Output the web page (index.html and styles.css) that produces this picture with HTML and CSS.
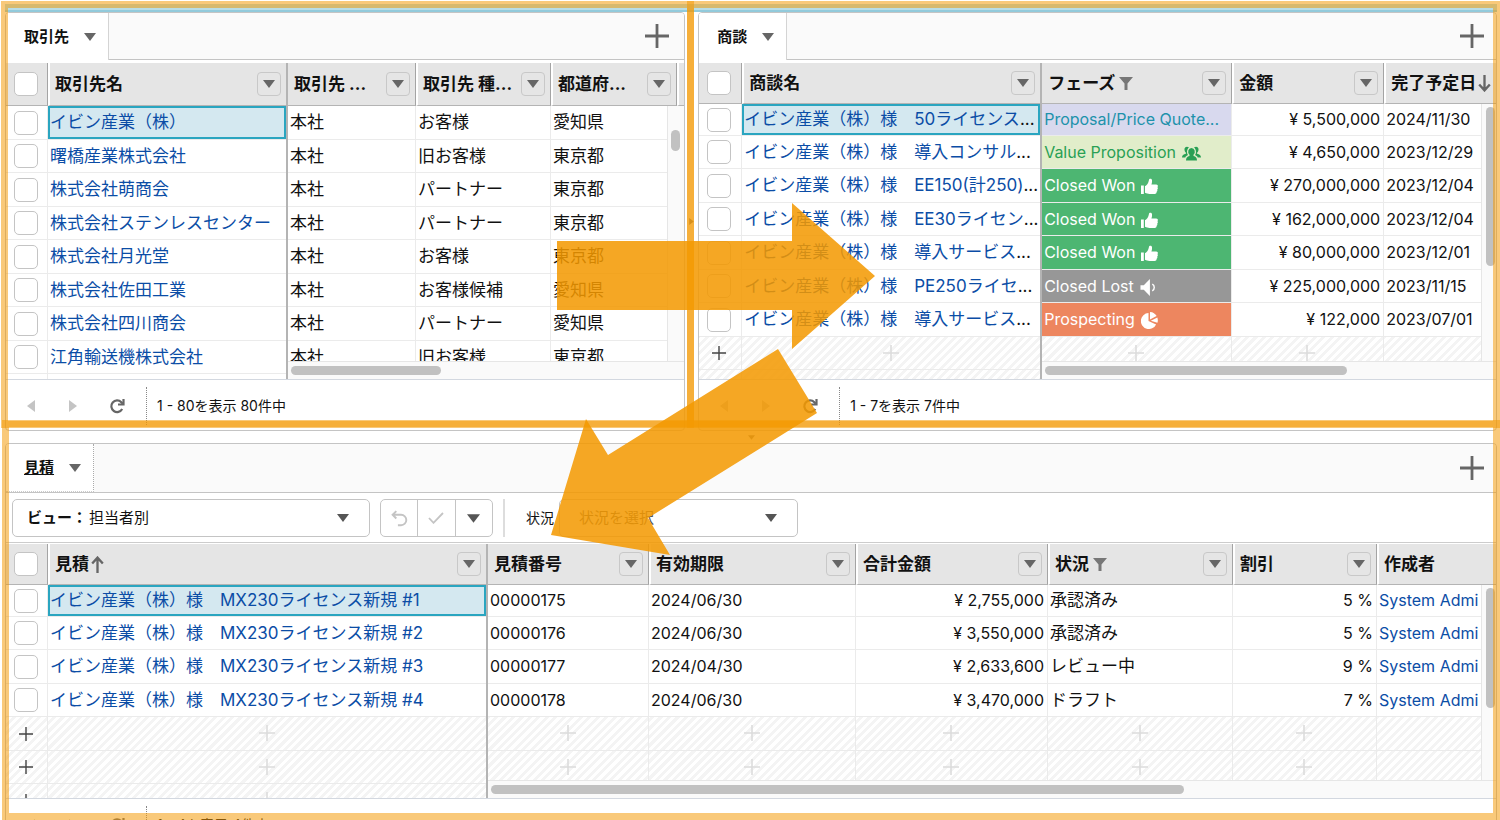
FILE: index.html
```html
<!DOCTYPE html>
<html lang="ja">
<head>
<meta charset="utf-8">
<title>取引先・商談・見積</title>
<link rel="stylesheet" href="styles.css">
</head>
<body>
<svg class="defs" aria-hidden="true">
  <symbol id="down" viewBox="0 0 12 8"><path d="M0 0h12L6 8z"/></symbol>
  <symbol id="left" viewBox="0 0 8 12"><path d="M8 0v12L0 6z"/></symbol>
  <symbol id="right" viewBox="0 0 8 12"><path d="M0 0v12l8-6z"/></symbol>
  <symbol id="plus" viewBox="0 0 24 24"><path d="M10.600 0h2.800v10.600H24v2.800H13.400V24h-2.800V13.400H0v-2.800h10.600z"/></symbol>
  <symbol id="thin-plus" viewBox="0 0 16 16"><path d="M7.200 0h1.600v7.200H16v1.600H8.800V16H7.200V8.800H0V7.200h7.200z"/></symbol>
  <symbol id="reload" viewBox="0 0 16 16"><path d="M13.200 11A5.800 5.800 0 1 1 12.300 4.200l1.500 1.500" fill="none" stroke="currentColor" stroke-width="2.200"/><path d="M15.600 1v6.600H9V5.400h4.400V1z"/></symbol>
  <symbol id="filter" viewBox="0 0 14 13"><path d="M0 0h14L8.500 6.500V13h-3V6.500z"/></symbol>
  <symbol id="sort-up" viewBox="0 0 12 16"><path d="M6 16V2M1 7l5-5.500L11 7" fill="none" stroke="currentColor" stroke-width="2.200"/></symbol>
  <symbol id="sort-down" viewBox="0 0 12 16"><path d="M6 0v14M1 9l5 5.500L11 9" fill="none" stroke="currentColor" stroke-width="2.200"/></symbol>
  <symbol id="undo" viewBox="0 0 16 16"><path d="M5 1L1.500 4.500 5 8M2 4.500h7.500a4.800 4.800 0 0 1 0 9.800H6.500" fill="none" stroke="currentColor" stroke-width="1.800"/></symbol>
  <symbol id="check" viewBox="0 0 16 12"><path d="M1 6l4.500 4.800L15 1" fill="none" stroke="currentColor" stroke-width="1.800"/></symbol>
  <symbol id="thumb" viewBox="0 0 17 17"><path d="M0 7.500h2.800V16H0zM4 8.200c2-1.200 3.400-3 3.900-6C8.100.5 10.600.3 11 2.300c.2 1.400-.1 2.900-.6 4.300h4.800c2 0 1.900 2 1.300 2.600.6.800.4 1.900-.3 2.400.4.900.1 1.800-.6 2.200.1 1.200-.6 2.200-2 2.200H8.500c-1.800 0-2.900-.6-4.500-1.200z"/></symbol>
  <symbol id="speaker" viewBox="0 0 17 18"><path d="M0 6.500h3.500L10 0v18l-6.500-6.500H0z"/><path d="M12.500 5.500c2.800 1.500 2.800 5.500 0 7" fill="none" stroke="currentColor" stroke-width="1.500"/></symbol>
  <symbol id="pie" viewBox="0 0 17 17"><path d="M7.500 1v8l7.600 3.400A8 8 0 1 1 7.500 1z"/><path d="M9 0c3 .2 5.300 1.600 6.600 4L9 7.400z"/><path d="M16.300 5.400c.7 1.800.7 3.600.1 5.400L9.800 8.700z"/></symbol>
  <symbol id="people" viewBox="0 0 19 14"><path d="M9.500 1.500a3.400 3.800 0 0 1 2 6.800v1.200c2.300.8 3.500 1.500 3.500 4.500H4c0-3 1.200-3.700 3.500-4.500V8.300a3.400 3.800 0 0 1 2-6.800z"/><path d="M7 .8C4.500-.6 2.200.6 2.500 3.200c.1 1.400.7 2.300 1.400 2.900v1.100C1.500 7.900 0 8.600 0 11h3.300c.4-1.200 1.500-2 2.700-2.400C4.400 6.400 4.700 3 7 .8zM12 .8c2.500-1.400 4.800-.2 4.500 2.400-.1 1.400-.7 2.300-1.400 2.900v1.100c2.400.7 3.900 1.400 3.900 3.800h-3.300c-.4-1.200-1.500-2-2.700-2.400C14.600 6.400 14.300 3 12 .8z"/></symbol>
</svg>

<div class="strip"></div>
<main class="app">
  <div class="top">
    <section class="panel panel-accounts">
      <div class="tabs">
        <button class="tab">取引先<svg class="caret"><use href="#down"/></svg></button>
        <button class="add" aria-label="タブを追加"><svg><use href="#plus"/></svg></button>
      </div>
      <div class="grid grid-accounts">
        <div class="frozen">
          <table>
            <colgroup><col class="c-check"><col></colgroup>
            <thead><tr>
              <th class="pick"><input type="checkbox" aria-label="すべて選択"></th>
              <th><div class="head"><span>取引先名</span><button class="menu" aria-label="取引先名メニュー"><svg><use href="#down"/></svg></button></div></th>
            </tr></thead>
            <tbody>
              <tr><td class="pick"><input type="checkbox" aria-label="行1"></td><td class="selected"><a href="#">イビン産業（株）</a></td></tr>
              <tr><td class="pick"><input type="checkbox" aria-label="行2"></td><td><a href="#">曙橋産業株式会社</a></td></tr>
              <tr><td class="pick"><input type="checkbox" aria-label="行3"></td><td><a href="#">株式会社萌商会</a></td></tr>
              <tr><td class="pick"><input type="checkbox" aria-label="行4"></td><td><a href="#">株式会社ステンレスセンター</a></td></tr>
              <tr><td class="pick"><input type="checkbox" aria-label="行5"></td><td><a href="#">株式会社月光堂</a></td></tr>
              <tr><td class="pick"><input type="checkbox" aria-label="行6"></td><td><a href="#">株式会社佐田工業</a></td></tr>
              <tr><td class="pick"><input type="checkbox" aria-label="行7"></td><td><a href="#">株式会社四川商会</a></td></tr>
              <tr><td class="pick"><input type="checkbox" aria-label="行8"></td><td><a href="#">江角輸送機株式会社</a></td></tr>
              <tr><td class="pick"><input type="checkbox" aria-label="行9"></td><td></td></tr>
            </tbody>
          </table>
        </div>
        <div class="scroll">
          <table>
            <colgroup><col class="a-site"><col class="a-type"><col class="a-pref"><col></colgroup>
            <thead><tr>
              <th><div class="head"><span>取引先 ...</span><button class="menu" aria-label="取引先 部門メニュー"><svg><use href="#down"/></svg></button></div></th>
              <th><div class="head"><span>取引先 種...</span><button class="menu" aria-label="取引先 種別メニュー"><svg><use href="#down"/></svg></button></div></th>
              <th><div class="head"><span>都道府...</span><button class="menu" aria-label="都道府県メニュー"><svg><use href="#down"/></svg></button></div></th>
              <th></th>
            </tr></thead>
            <tbody>
              <tr><td>本社</td><td>お客様</td><td>愛知県</td><td></td></tr>
              <tr><td>本社</td><td>旧お客様</td><td>東京都</td><td></td></tr>
              <tr><td>本社</td><td>パートナー</td><td>東京都</td><td></td></tr>
              <tr><td>本社</td><td>パートナー</td><td>東京都</td><td></td></tr>
              <tr><td>本社</td><td>お客様</td><td>東京都</td><td></td></tr>
              <tr><td>本社</td><td>お客様候補</td><td>愛知県</td><td></td></tr>
              <tr><td>本社</td><td>パートナー</td><td>愛知県</td><td></td></tr>
              <tr><td>本社</td><td>旧お客様</td><td>東京都</td><td></td></tr>
            </tbody>
          </table>
          <div class="vbar"><i></i></div>
          <div class="hbar"><i></i></div>
        </div>
      </div>
      <footer class="pager">
        <button class="prev" aria-label="前へ"><svg><use href="#left"/></svg></button>
        <button class="next" aria-label="次へ"><svg><use href="#right"/></svg></button>
        <button class="reload" aria-label="更新"><svg><use href="#reload"/></svg></button>
        <span class="count">1 - 80を表示 80件中</span>
      </footer>
    </section>

    <div class="split-v"><svg><use href="#right"/></svg></div>

    <section class="panel panel-deals">
      <div class="tabs">
        <button class="tab">商談<svg class="caret"><use href="#down"/></svg></button>
        <button class="add" aria-label="タブを追加"><svg><use href="#plus"/></svg></button>
      </div>
      <div class="grid grid-deals">
        <div class="frozen">
          <table>
            <colgroup><col class="c-check"><col></colgroup>
            <thead><tr>
              <th class="pick"><input type="checkbox" aria-label="すべて選択"></th>
              <th><div class="head"><span>商談名</span><button class="menu" aria-label="商談名メニュー"><svg><use href="#down"/></svg></button></div></th>
            </tr></thead>
            <tbody>
              <tr><td class="pick"><input type="checkbox" aria-label="行1"></td><td class="selected"><a href="#">イビン産業（株）様　50ライセンス</a>...</td></tr>
              <tr><td class="pick"><input type="checkbox" aria-label="行2"></td><td><a href="#">イビン産業（株）様　導入コンサル</a>...</td></tr>
              <tr><td class="pick"><input type="checkbox" aria-label="行3"></td><td><a href="#">イビン産業（株）様　EE150(計250)</a>...</td></tr>
              <tr><td class="pick"><input type="checkbox" aria-label="行4"></td><td><a href="#">イビン産業（株）様　EE30ライセン</a>...</td></tr>
              <tr><td class="pick"><input type="checkbox" aria-label="行5"></td><td><a href="#">イビン産業（株）様　導入サービス</a>...</td></tr>
              <tr><td class="pick"><input type="checkbox" aria-label="行6"></td><td><a href="#">イビン産業（株）様　PE250ライセ</a>...</td></tr>
              <tr><td class="pick"><input type="checkbox" aria-label="行7"></td><td><a href="#">イビン産業（株）様　導入サービス</a>...</td></tr>
              <tr class="new"><td class="pick"><svg><use href="#thin-plus"/></svg></td><td><svg><use href="#thin-plus"/></svg></td></tr>
              <tr class="new"><td class="pick"></td><td></td></tr>
            </tbody>
          </table>
        </div>
        <div class="scroll">
          <table>
            <colgroup><col class="d-phase"><col class="d-amount"><col></colgroup>
            <thead><tr>
              <th><div class="head"><span>フェーズ</span><svg class="filter"><use href="#filter"/></svg><button class="menu" aria-label="フェーズメニュー"><svg><use href="#down"/></svg></button></div></th>
              <th><div class="head"><span>金額</span><button class="menu" aria-label="金額メニュー"><svg><use href="#down"/></svg></button></div></th>
              <th><div class="head"><span>完了予定日</span><svg class="sort"><use href="#sort-down"/></svg></div></th>
            </tr></thead>
            <tbody>
              <tr><td class="phase quote">Proposal/Price Quote...</td><td class="num">¥ 5,500,000</td><td class="latin">2024/11/30</td></tr>
              <tr><td class="phase value">Value Proposition<svg class="wide"><use href="#people"/></svg></td><td class="num">¥ 4,650,000</td><td class="latin">2023/12/29</td></tr>
              <tr><td class="phase won">Closed Won<svg><use href="#thumb"/></svg></td><td class="num">¥ 270,000,000</td><td class="latin">2023/12/04</td></tr>
              <tr><td class="phase won">Closed Won<svg><use href="#thumb"/></svg></td><td class="num">¥ 162,000,000</td><td class="latin">2023/12/04</td></tr>
              <tr><td class="phase won">Closed Won<svg><use href="#thumb"/></svg></td><td class="num">¥ 80,000,000</td><td class="latin">2023/12/01</td></tr>
              <tr><td class="phase lost">Closed Lost<svg><use href="#speaker"/></svg></td><td class="num">¥ 225,000,000</td><td class="latin">2023/11/15</td></tr>
              <tr><td class="phase prospect">Prospecting<svg><use href="#pie"/></svg></td><td class="num">¥ 122,000</td><td class="latin">2023/07/01</td></tr>
              <tr class="new"><td><svg><use href="#thin-plus"/></svg></td><td><svg><use href="#thin-plus"/></svg></td><td></td></tr>
            </tbody>
          </table>
          <div class="vbar"><i></i></div>
          <div class="hbar"><i></i></div>
        </div>
      </div>
      <footer class="pager">
        <button class="prev" aria-label="前へ"><svg><use href="#left"/></svg></button>
        <button class="next" aria-label="次へ"><svg><use href="#right"/></svg></button>
        <button class="reload" aria-label="更新"><svg><use href="#reload"/></svg></button>
        <span class="count">1 - 7を表示 7件中</span>
      </footer>
    </section>
  </div>

  <div class="split-h"><svg><use href="#down"/></svg></div>

  <section class="panel panel-quotes">
    <div class="tabs">
      <button class="tab focused"><u>見積</u><svg class="caret"><use href="#down"/></svg></button>
      <button class="add" aria-label="タブを追加"><svg><use href="#plus"/></svg></button>
    </div>
    <div class="toolbar">
      <div class="picker view">
        <label for="view">ビュー：</label>
        <select id="view"><option>担当者別</option></select>
        <svg><use href="#down"/></svg>
      </div>
      <div class="group">
        <button class="off" aria-label="元に戻す"><svg class="undo"><use href="#undo"/></svg></button>
        <button class="off" aria-label="保存"><svg class="check"><use href="#check"/></svg></button>
        <button aria-label="その他"><svg class="caret"><use href="#down"/></svg></button>
      </div>
      <div class="filterbox">
        <label for="status">状況</label>
        <div class="picker status">
          <select id="status"><option>状況を選択</option></select>
          <svg><use href="#down"/></svg>
        </div>
      </div>
    </div>
    <div class="grid grid-quotes">
      <div class="frozen">
        <table>
          <colgroup><col class="c-check"><col></colgroup>
          <thead><tr>
            <th class="pick"><input type="checkbox" aria-label="すべて選択"></th>
            <th><div class="head"><span>見積</span><svg class="sort"><use href="#sort-up"/></svg><button class="menu" aria-label="見積メニュー"><svg><use href="#down"/></svg></button></div></th>
          </tr></thead>
          <tbody>
            <tr><td class="pick"><input type="checkbox" aria-label="行1"></td><td class="selected"><a href="#">イビン産業（株）様　MX230ライセンス新規 #1</a></td></tr>
            <tr><td class="pick"><input type="checkbox" aria-label="行2"></td><td><a href="#">イビン産業（株）様　MX230ライセンス新規 #2</a></td></tr>
            <tr><td class="pick"><input type="checkbox" aria-label="行3"></td><td><a href="#">イビン産業（株）様　MX230ライセンス新規 #3</a></td></tr>
            <tr><td class="pick"><input type="checkbox" aria-label="行4"></td><td><a href="#">イビン産業（株）様　MX230ライセンス新規 #4</a></td></tr>
            <tr class="new"><td class="pick"><svg><use href="#thin-plus"/></svg></td><td><svg><use href="#thin-plus"/></svg></td></tr>
            <tr class="new"><td class="pick"><svg><use href="#thin-plus"/></svg></td><td><svg><use href="#thin-plus"/></svg></td></tr>
            <tr class="new"><td class="pick"><svg><use href="#thin-plus"/></svg></td><td><svg><use href="#thin-plus"/></svg></td></tr>
          </tbody>
        </table>
      </div>
      <div class="scroll">
        <table>
          <colgroup><col class="q-no"><col class="q-date"><col class="q-total"><col class="q-status"><col class="q-off"><col></colgroup>
          <thead><tr>
            <th><div class="head"><span>見積番号</span><button class="menu" aria-label="見積番号メニュー"><svg><use href="#down"/></svg></button></div></th>
            <th><div class="head"><span>有効期限</span><button class="menu" aria-label="有効期限メニュー"><svg><use href="#down"/></svg></button></div></th>
            <th><div class="head"><span>合計金額</span><button class="menu" aria-label="合計金額メニュー"><svg><use href="#down"/></svg></button></div></th>
            <th><div class="head"><span>状況</span><svg class="filter"><use href="#filter"/></svg><button class="menu" aria-label="状況メニュー"><svg><use href="#down"/></svg></button></div></th>
            <th><div class="head"><span>割引</span><button class="menu" aria-label="割引メニュー"><svg><use href="#down"/></svg></button></div></th>
            <th><div class="head"><span>作成者</span></div></th>
          </tr></thead>
          <tbody>
            <tr><td class="latin">00000175</td><td class="latin">2024/06/30</td><td class="num">¥ 2,755,000</td><td>承認済み</td><td class="num">5 %</td><td class="latin"><a href="#">System Admi</a></td></tr>
            <tr><td class="latin">00000176</td><td class="latin">2024/06/30</td><td class="num">¥ 3,550,000</td><td>承認済み</td><td class="num">5 %</td><td class="latin"><a href="#">System Admi</a></td></tr>
            <tr><td class="latin">00000177</td><td class="latin">2024/04/30</td><td class="num">¥ 2,633,600</td><td>レビュー中</td><td class="num">9 %</td><td class="latin"><a href="#">System Admi</a></td></tr>
            <tr><td class="latin">00000178</td><td class="latin">2024/06/30</td><td class="num">¥ 3,470,000</td><td>ドラフト</td><td class="num">7 %</td><td class="latin"><a href="#">System Admi</a></td></tr>
            <tr class="new"><td><svg><use href="#thin-plus"/></svg></td><td><svg><use href="#thin-plus"/></svg></td><td><svg><use href="#thin-plus"/></svg></td><td><svg><use href="#thin-plus"/></svg></td><td><svg><use href="#thin-plus"/></svg></td><td></td></tr>
            <tr class="new"><td><svg><use href="#thin-plus"/></svg></td><td><svg><use href="#thin-plus"/></svg></td><td><svg><use href="#thin-plus"/></svg></td><td><svg><use href="#thin-plus"/></svg></td><td><svg><use href="#thin-plus"/></svg></td><td></td></tr>
          </tbody>
        </table>
        <div class="vbar"><i></i></div>
        <div class="hbar"><i></i></div>
      </div>
    </div>
    <footer class="pager">
      <button class="prev" aria-label="前へ"><svg><use href="#left"/></svg></button>
      <button class="next" aria-label="次へ"><svg><use href="#right"/></svg></button>
      <button class="reload" aria-label="更新"><svg><use href="#reload"/></svg></button>
      <span class="count">1 - 4を表示 4件中</span>
    </footer>
  </section>
</main>

<svg class="marks" viewBox="0 0 1500 820" preserveAspectRatio="none" aria-hidden="true">
  <g fill="none" stroke="#f39800" stroke-opacity=".52" stroke-width="7">
    <rect x="4.500" y="4.500" width="686" height="420"/>
    <rect x="690.500" y="4.500" width="806" height="420"/>
    <rect x="5.500" y="423.500" width="1491" height="393"/>
  </g>
  <g fill="#f39800" fill-opacity=".86">
    <path d="M557 241H792V203L875 276L792 349V310H557Z"/>
    <path d="M778 349L817 413L648 518L670 555L551 535L586 419L608 455Z"/>
  </g>
</svg>
</body>
</html>
```
FILE: styles.css
```css
* { box-sizing: border-box; }
html, body { height: 100%; }
body {
  margin: 0;
  overflow: hidden;
  position: relative;
  background: #fff;
  color: #111;
  font-family: Inter, "Noto Sans CJK JP", sans-serif;
  font-size: 17px;
  line-height: 24px;
}
button, select, input { font: inherit; color: inherit; margin: 0; }
button { background: none; border: 0; padding: 0; display: flex; align-items: center; justify-content: center; }
svg { display: block; fill: currentColor; flex: none; }
a { color: #0b4da6; text-decoration: none; }
.defs { position: absolute; width: 0; height: 0; }

.strip { height: 12px; margin: 0 3px 0 5px; border-top: 4px solid #fff; border-bottom: 2px solid #92cadb; background: #b9dde6; }
.app { padding: 0 3px 0 5px; }
.top { display: flex; }
.panel { border: 1px solid #c4c4c4; border-radius: 4px; overflow: hidden; min-width: 0; }
.panel-accounts { flex: 680 1 0; }
.panel-deals { flex: 799 1 0; }
.split-v, .split-h { display: flex; align-items: center; justify-content: center; color: #777; }
.split-v { width: 13px; }
.split-v svg { width: 5px; height: 7px; }
.split-h { height: 12px; }
.split-h svg { width: 7px; height: 5px; }

/* tabs */
.tabs { display: flex; justify-content: space-between; height: 47px; margin-bottom: 3px; background: #fafafa; border-bottom: 1px solid #c4c4c4; padding-right: 12px; }
.panel-accounts .tabs { padding-right: 15px; }
.tab { height: 47px; gap: 15px; padding: 0 12px 0 18px; background: #fff; border-right: 1px solid #d4d4d4; font-size: 15px; font-weight: 700; }
.tab.focused { height: 48px; border-right: 1px dotted #aaa; border-bottom: 1px dotted #ccc; }
.caret { width: 12px; height: 8px; color: #666; }
.add { color: #666; }
.add svg { width: 24px; height: 24px; }

/* toolbar */
.toolbar { display: flex; align-items: center; gap: 10px; height: 49px; padding: 0 6px; border-bottom: 1px solid #ccc; margin-bottom: 1px; font-size: 15px; }
.panel-quotes .tabs { margin-bottom: 1px; height: 49px; }
.picker { position: relative; display: flex; align-items: center; height: 38px; border: 1px solid #c4c4c4; border-radius: 5px; background: #fff; }
.picker label { padding-left: 14px; font-weight: 700; }
.picker select { flex: 1; height: 36px; appearance: none; border: 0; background: none; padding: 0 40px 0 2px; }
.picker svg { position: absolute; right: 20px; width: 12px; height: 8px; color: #555; pointer-events: none; }
.view { width: 358px; }
.status { width: 239px; }
.status select { padding-left: 19px; color: #555; }
.group { display: flex; width: 113px; height: 38px; border: 1px solid #c4c4c4; border-radius: 5px; }
.group button { flex: 1; border-left: 1px solid #c4c4c4; }
.group button:first-child { border-left: 0; }
.group .off { color: #c4c4c4; }
.group .caret { width: 13px; height: 9px; color: #555; }
.undo { width: 17px; height: 17px; }
.check { width: 16px; height: 12px; }
.filterbox { display: flex; align-items: center; gap: 5px; height: 38px; padding-left: 21px; border-left: 2px solid #ddd; }
.filterbox label { font-size: 14px; }

/* grids */
.grid { display: flex; overflow: hidden; border-bottom: 1px solid #d3d8e0; }
.grid-accounts { height: 317px; }
.grid-deals { height: 317px; }
.grid-quotes { height: 255px; }
.frozen { flex: none; overflow: hidden; border-right: 2px solid #b4b4b4; }
.grid-accounts .frozen { width: 282px; }
.grid-deals .frozen { width: 343px; }
.grid-quotes .frozen { width: 482px; }
.scroll { flex: 1; min-width: 0; overflow: hidden; position: relative; background: #fafafa; }
table { width: 100%; table-layout: fixed; border-spacing: 0; }
tr { background: #fff; }
.c-check { width: 42px; }
.grid-deals .c-check { width: 43px; }
.a-site { width: 128px; }
.a-type { width: 135px; }
.a-pref { width: 126px; }
.d-phase { width: 190px; }
.d-amount { width: 152px; }
.q-no { width: 161px; }
.q-date { width: 207px; }
.q-total { width: 192px; }
.q-status { width: 185px; }
.q-off { width: 144px; }

th { height: 41px; padding: 0; background: #e5e5e5; border-right: 1px solid #a4a4a4; border-bottom: 1px solid #b4b4b4; border-left: 2px solid #fff; font-weight: 700; text-align: left; }
.grid-accounts th { height: 43px; }
th:first-child { border-left: 0; }
th:last-child { border-right: 0; }
.head { display: flex; align-items: center; padding: 0 5px; }
th:first-child .head { padding-left: 6px; }
.head span { white-space: nowrap; }
.menu { width: 24px; height: 24px; margin-left: auto; border: 1px solid #c8c8c8; border-radius: 4px; color: #666; flex: none; }
.menu svg { width: 12px; height: 8px; }
.filter { width: 14px; height: 13px; margin-left: 4px; color: #777; }
.sort { width: 13px; height: 17px; margin-left: 2px; color: #666; }

td { height: 34px; padding: 0 3px 1px 2px; border-right: 1px solid #ebebeb; border-bottom: 1px solid #ebebeb; white-space: nowrap; overflow: hidden; line-height: 24px; }
tbody tr:nth-child(even) td { height: 33px; }
.grid-deals tbody tr:first-child td, .grid-quotes tbody tr:first-child td { height: 32px; }
.num, .latin, .phase { font-size: 16px; }
.num { text-align: right; }
.pick input { appearance: none; display: block; width: 24px; height: 24px; margin: 0 auto; border: 1px solid #c4c4c4; border-radius: 5px; background: #fff; }
.pick, td.pick { padding: 0 2px 0 0; }
.frozen td:last-child { border-right: 0; }
.selected { background: #d4e8f0; box-shadow: inset 0 0 0 2px #2aa5c0; }

.phase svg { display: inline-block; vertical-align: -4px; width: 17px; height: 17px; margin-left: 6px; }
.phase .wide { width: 19px; height: 15px; vertical-align: -3px; }
.quote { background: #d8d9ee; color: #1d92ab; }
.value { background: #e1edca; color: #29a055; }
.won { background: #4db672; color: #fff; }
.lost { background: #979797; color: #fff; }
.prospect { background: #ed865f; color: #fff; }

.new td { background: repeating-linear-gradient(-45deg, #fff 0 3px, #f4f4f4 3px 6px); color: #dcdcdc; }
.new td svg { width: 16px; height: 16px; margin: 0 auto; }
.new td.pick svg { width: 14px; height: 14px; color: #444; }

/* scrollbars */
.vbar, .hbar { position: absolute; background: #fafafa; }
.vbar { top: 41px; right: 0; bottom: 0; width: 15px; padding: 3px 2px 0 4px; border-left: 1px solid #e6e6e6; }
.grid-accounts .vbar { top: 43px; width: 17px; padding: 24px 0 0 3px; }
.hbar { left: 0; right: 0; bottom: 0; height: 18px; padding: 4px 0 0 3px; border-top: 1px solid #e6e6e6; }
.vbar i, .hbar i { display: block; border-radius: 5px; background: #c1c1c1; }
.vbar i { width: 9px; height: 159px; }
.hbar i { width: 302px; height: 9px; }
.grid-accounts .vbar i { height: 21px; }
.grid-accounts .hbar i { width: 150px; }
.grid-quotes .vbar i { height: 120px; }
.grid-quotes .hbar i { width: 693px; }

/* pager */
.pager { display: flex; align-items: center; height: 50px; padding: 1px 0 0 21px; font-size: 14px; }
.pager .prev, .pager .next { width: 8px; color: #c4c4c4; }
.pager .next { margin-left: 34px; }
.pager .prev svg, .pager .next svg { width: 8px; height: 12px; }
.pager .reload { margin-left: 32px; color: #666; }
.reload svg { width: 16px; height: 16px; }
.count { display: flex; align-items: center; height: 38px; margin-left: 21px; padding-left: 10px; border-left: 1px dotted #888; }

.marks { position: absolute; top: 0; left: 0; width: 100%; height: 100%; pointer-events: none; }
```
